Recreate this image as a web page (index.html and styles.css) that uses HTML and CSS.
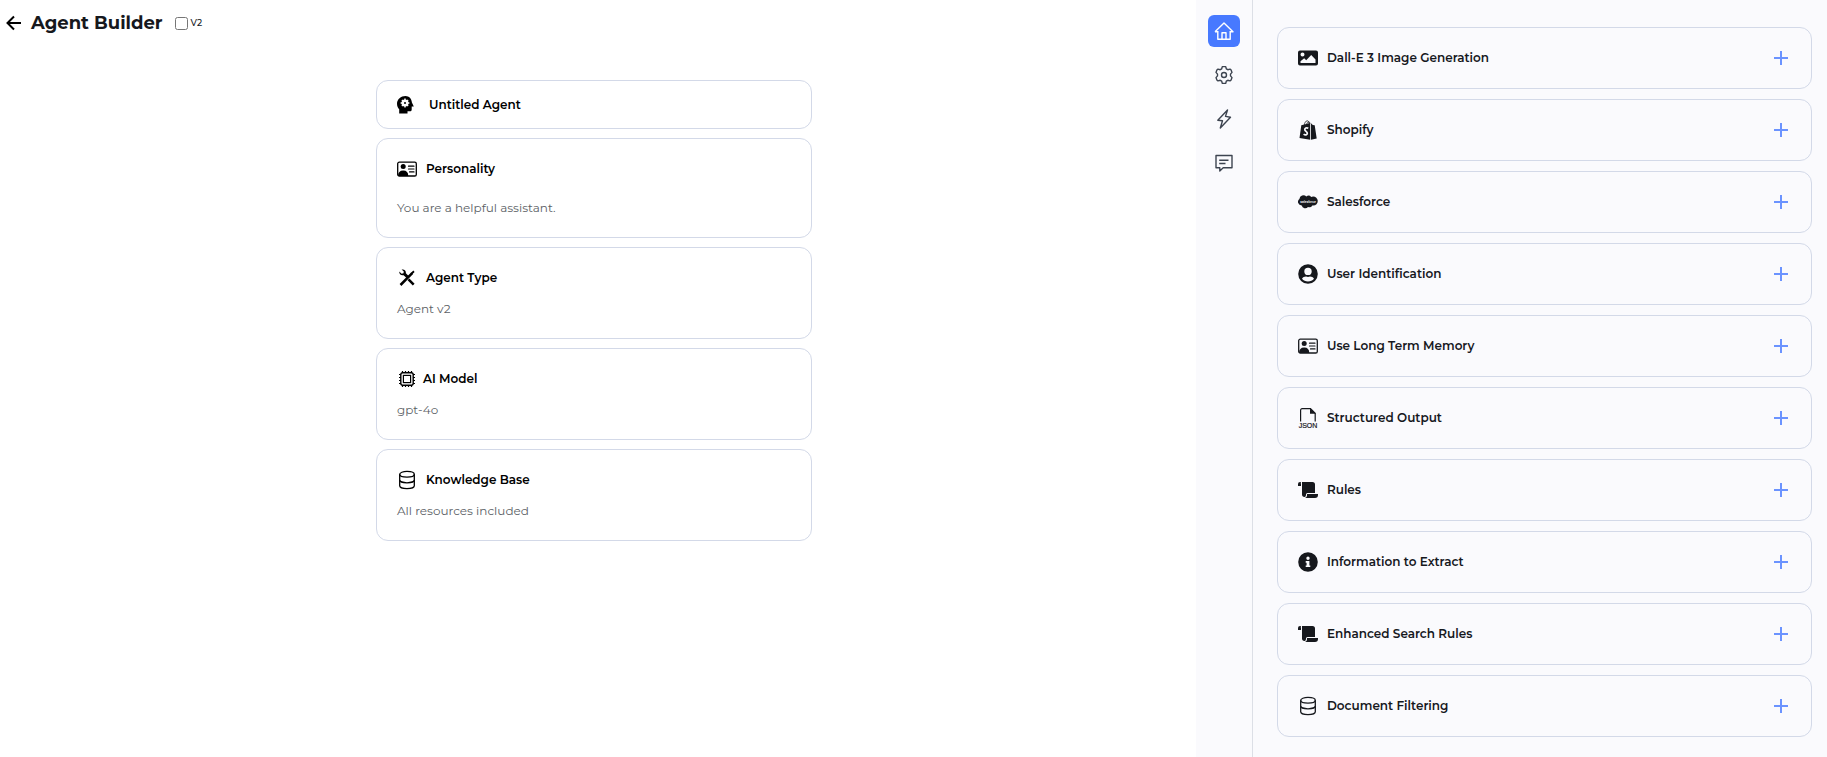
FILE: index.html
```html
<!DOCTYPE html>
<html lang="en">

<head>
    <meta charset="UTF-8">
    <meta name="viewport" content="width=device-width, initial-scale=1.0">
    <title>Agent Builder</title>
    <link rel="stylesheet" href="styles.css">
</head>

<body>
    <!-- shared icons -->
    <svg class="icon-defs" aria-hidden="true">
        <symbol id="icon-id" viewBox="0 0 20 20">
            <rect x="0.7" y="3.2" width="18.6" height="13.8" rx="1.6" fill="none" stroke="currentColor" stroke-width="1.3"/>
            <circle cx="6.2" cy="7.6" r="2.5"/>
            <path d="M1 17c.1-3.600 1.800-5.500 5.200-5.500s5 1.900 5.100 5.500z"/>
            <path d="M11.500 7.200h5.500M11.500 10h5.500M12.500 12.900h4.500" stroke="currentColor" stroke-width="1.200" stroke-linecap="round"/>
        </symbol>
        <symbol id="icon-db" viewBox="0 0 20 20">
            <g fill="none" stroke="currentColor" stroke-width="1.300">
                <ellipse cx="10" cy="4.300" rx="7.300" ry="2.900"/>
                <path d="M2.700 4.300v11.400c0 1.600 3.300 2.900 7.300 2.900s7.300-1.300 7.300-2.900V4.300"/>
                <path d="M2.700 9.900c0 1.600 3.300 2.900 7.300 2.900s7.300-1.300 7.300-2.900"/>
            </g>
        </symbol>
        <symbol id="icon-scroll" viewBox="0 0 20 20">
            <path d="M2 2a2 2 0 0 0-2 2v2h3V4a2 2 0 0 1 0-2zM4 2h10.500A2.500 2.500 0 0 1 17 4.500V13H9.500A1.500 1.500 0 0 0 8 14.500c0 1.300-.4 2.500-1.400 2.500C5 17.100 4 16 4 14.500z"/>
            <path d="M9 14h11v1a3 3 0 0 1-3 3H7c1.300-.4 2-1.500 2-3z"/>
        </symbol>
        <symbol id="icon-plus" viewBox="0 0 14 14">
            <path d="M7 0v14M0 7h14" stroke="currentColor" stroke-width="2"/>
        </symbol>
    </svg>

    <div class="layout">
        <main class="builder">
            <header class="topbar">
                <a class="back" href="#" aria-label="Back">
                    <svg viewBox="0 0 16 16"><path d="M15 8H2M8 1.500L1.500 8 8 14.500" fill="none" stroke="currentColor" stroke-width="2"/></svg>
                </a>
                <h1>Agent Builder</h1>
                <label class="version"><input type="checkbox"> V2</label>
            </header>

            <div class="cards">
                <section class="card name-card">
                    <h2>
                        <svg class="icon" viewBox="0 0 20 20">
                            <path d="M8.500 1C4 1 0 4.300 0 8.700c0 2.500 1 4.300 2.200 5.500V18.500h8.300v-2.200h2.300c1.200 0 1.900-.7 1.900-1.900v-2.800h2.100L14.900 7.500C14.700 3.800 12 1 8.500 1z"/>
                            <circle cx="8" cy="8" r="2.400" fill="none" stroke="#fff" stroke-width="2.200"/>
                            <path d="M8 3.600v8.800M3.600 8h8.800M4.900 4.900l6.200 6.200M11.100 4.900l-6.200 6.200" stroke="#fff" stroke-width="1.400"/>
                            <circle cx="8" cy="8" r="1"/>
                        </svg>
                        Untitled Agent
                    </h2>
                </section>
                <section class="card roomy">
                    <h2><svg class="icon"><use href="#icon-id"/></svg>Personality</h2>
                    <p>You are a helpful assistant.</p>
                </section>
                <section class="card">
                    <h2>
                        <svg class="icon" viewBox="0 0 20 20">
                            <path d="M3.500 17L15.200 5.200M11.500 11.300l5.200 5.400" stroke="currentColor" stroke-width="2.500"/>
                            <path d="M13.600 5.200l2.700-2.600 1.300 1.300-2.600 2.700zM2.300 3.500l2.300 2.200 1.900-.4.300-1.900-2.200-1.800c2.300-.7 4.700 1 4.300 3.600l3.200 3.300-2 2.100-3.500-3.400C4.100 8 2 5.900 2.300 3.500z"/>
                        </svg>
                        Agent Type
                    </h2>
                    <p>Agent v2</p>
                </section>
                <section class="card model-card">
                    <h2>
                        <svg class="icon" viewBox="0 0 20 20">
                            <g fill="none" stroke="currentColor">
                                <rect x="3.800" y="3.800" width="12.400" height="12.400" rx="2" stroke-width="1.400"/>
                                <rect x="6.400" y="6.400" width="7.200" height="7.200" stroke-width="1.200"/>
                                <path d="M5.500 2v2M8.500 2v2M11.500 2v2M14.500 2v2M5.500 16v2M8.500 16v2M11.500 16v2M14.500 16v2M2 5.500h2M2 8.500h2M2 11.500h2M2 14.500h2M16 5.500h2M16 8.500h2M16 11.500h2M16 14.500h2" stroke-width="1.200"/>
                            </g>
                        </svg>
                        AI Model
                    </h2>
                    <p>gpt-4o</p>
                </section>
                <section class="card">
                    <h2><svg class="icon"><use href="#icon-db"/></svg>Knowledge Base</h2>
                    <p>All resources included</p>
                </section>
            </div>
        </main>

        <nav class="rail">
            <button class="active" aria-label="Home">
                <svg viewBox="0 0 20 20"><path d="M3.800 10v8.200h12.400V10M1 10.700L10 2l9 8.700h-2.800M1 10.700h2.800M8 18v-6.200h4V18"/></svg>
            </button>
            <button aria-label="Settings">
                <svg viewBox="0 0 20 20"><path d="M8.300 1.600h3.400l.6 2.200 1.500.9 2.200-.6 1.100 1 .9 2.300-1.500 1.700v1.800l1.500 1.700-.9 2.300-1.100 1-2.200-.6-1.500.9-.6 2.200H8.300l-.6-2.200-1.500-.9-2.200.6-1.100-1L2 12.600l1.500-1.700V9.100L2 7.400l.9-2.300 1.100-1 2.200.6 1.500-.9z"/><circle cx="10" cy="10" r="2.500"/></svg>
            </button>
            <button aria-label="Actions">
                <svg viewBox="0 0 20 20"><path d="M13.500 1L3.800 11.200l4.700.6L6.300 19 16.500 8.300l-5-.9z"/></svg>
            </button>
            <button aria-label="Messages">
                <svg viewBox="0 0 20 20"><path d="M2 2.500h16v12.300H9.200L5.800 18v-3.200H2zM5.200 7.200h9.300M5.200 10.500h6.300"/></svg>
            </button>
        </nav>

        <aside class="panel">
            <ul class="tools">
                <li>
                    <svg class="icon" viewBox="0 0 20 20">
                        <path fill-rule="evenodd" d="M2 2.500h16a2 2 0 0 1 2 2v11a2 2 0 0 1-2 2H2a2 2 0 0 1-2-2v-11a2 2 0 0 1 2-2zM4.500 4.500a2 2 0 1 0 0 4 2 2 0 0 0 0-4zM2.500 15h15v-3.500L13.200 7l-5 5.200-2-2-3.700 3z"/>
                    </svg>
                    <span>Dall-E 3 Image Generation</span>
                    <button aria-label="Add Dall-E 3 Image Generation"><svg><use href="#icon-plus"/></svg></button>
                </li>
                <li>
                    <svg class="icon" viewBox="0 0 20 20">
                        <path d="M3.300 5.200l8.900-2.100v16.700L1.500 17.900zM13 3.200l1.800 1.900 1.900.2 2 13.100-5.700 1.400z"/>
                        <path d="M6.200 5.500C6.500 2.800 7.800.8 9.200.8s2.100 1.500 2.100 3.600M8.500 4.700C9 2.500 10.500 1 12.400 3.100" fill="none" stroke="currentColor" stroke-width=".8"/>
                        <path d="M10.300 8.200c-1.800-.9-3.600-.1-3.500 1.400.1 1.700 2.500 1.900 2.500 3.700 0 1.700-2 2.200-3.700.8" fill="none" stroke="#fafafd" stroke-width="1.700"/>
                    </svg>
                    <span>Shopify</span>
                    <button aria-label="Add Shopify"><svg><use href="#icon-plus"/></svg></button>
                </li>
                <li>
                    <svg class="icon" viewBox="0 0 20 20">
                        <path d="M8.300 4.500A3.600 3.600 0 0 1 13.200 5a4.400 4.400 0 0 1 1.800-.6 4.600 4.600 0 0 1 .3 9.200l-1-.1a3.400 3.400 0 0 1-4.300 1.500 3.600 3.600 0 0 1-6.300-1.400A3.700 3.700 0 0 1 1.400 7a4.100 4.100 0 0 1 6.900-2.500z"/>
                        <text class="cloud-text" x="10" y="11" text-anchor="middle">salesforce</text>
                    </svg>
                    <span>Salesforce</span>
                    <button aria-label="Add Salesforce"><svg><use href="#icon-plus"/></svg></button>
                </li>
                <li>
                    <svg class="icon" viewBox="0 0 20 20">
                        <path fill-rule="evenodd" d="M10 .2a9.800 9.800 0 1 1 0 19.600A9.800 9.800 0 0 1 10 .2zm0 3.500a3.700 3.700 0 1 0 0 7.400 3.700 3.700 0 0 0 0-7.400zM4 14.800c1.500 1.800 3.600 2.800 6 2.800s4.500-1 6-2.800c-.8-1.500-2.300-2.300-4-2.300-1.400.5-2.600.5-4 0-1.700 0-3.200.8-4 2.300z"/>
                    </svg>
                    <span>User Identification</span>
                    <button aria-label="Add User Identification"><svg><use href="#icon-plus"/></svg></button>
                </li>
                <li>
                    <svg class="icon"><use href="#icon-id"/></svg>
                    <span>Use Long Term Memory</span>
                    <button aria-label="Add Use Long Term Memory"><svg><use href="#icon-plus"/></svg></button>
                </li>
                <li>
                    <svg class="icon json-icon" viewBox="0 0 20 20">
                        <path d="M2.600 13.500V2.400C2.600 1.300 3.200.7 4.200.7h8.300l4.700 4.500v8.300" fill="none" stroke="currentColor" stroke-width="1.200"/>
                        <path d="M12 .2V5.700h5.700z"/>
                        <text x="10" y="20" text-anchor="middle">JSON</text>
                    </svg>
                    <span>Structured Output</span>
                    <button aria-label="Add Structured Output"><svg><use href="#icon-plus"/></svg></button>
                </li>
                <li>
                    <svg class="icon"><use href="#icon-scroll"/></svg>
                    <span>Rules</span>
                    <button aria-label="Add Rules"><svg><use href="#icon-plus"/></svg></button>
                </li>
                <li>
                    <svg class="icon" viewBox="0 0 20 20">
                        <path fill-rule="evenodd" d="M10 .2a9.800 9.800 0 1 1 0 19.600A9.800 9.800 0 0 1 10 .2zm0 4.300a1.700 1.700 0 1 0 0 3.400 1.700 1.700 0 0 0 0-3.400zM7.700 9v1.700h.9v2.700h-.9V15h4.600v-1.600h-.9V9z"/>
                    </svg>
                    <span>Information to Extract</span>
                    <button aria-label="Add Information to Extract"><svg><use href="#icon-plus"/></svg></button>
                </li>
                <li>
                    <svg class="icon"><use href="#icon-scroll"/></svg>
                    <span>Enhanced Search Rules</span>
                    <button aria-label="Add Enhanced Search Rules"><svg><use href="#icon-plus"/></svg></button>
                </li>
                <li>
                    <svg class="icon"><use href="#icon-db"/></svg>
                    <span>Document Filtering</span>
                    <button aria-label="Add Document Filtering"><svg><use href="#icon-plus"/></svg></button>
                </li>
            </ul>
        </aside>
    </div>
</body>

</html>
```
FILE: styles.css
```css
* {
    box-sizing: border-box;
}

body {
    margin: 0;
    font-family: Montserrat, Inter, sans-serif;
    font-size: 12px;
    line-height: 20px;
    color: #16181d;
    background-color: #fff;
}

h1, h2, p, ul {
    margin: 0;
    padding: 0;
}

button {
    display: flex;
    align-items: center;
    justify-content: center;
    padding: 0;
    border: none;
    background: none;
    cursor: pointer;
}

.icon-defs {
    display: none;
}

.icon {
    width: 20px;
    height: 20px;
    flex-shrink: 0;
    fill: currentColor;
}

.layout {
    display: grid;
    grid-template-columns: 25fr 57px 12fr;
    min-height: 100vh;
}

/* left side */
.builder {
    padding: 8px 14px 8px 6px;
}

.topbar {
    display: flex;
    align-items: center;
    height: 30px;
}

.back {
    display: flex;
    margin-right: 9px;
    color: #000;
}

.back svg {
    width: 16px;
    height: 16px;
}

h1 {
    font-size: 18px;
    font-weight: 700;
}

.version {
    display: flex;
    align-items: center;
    gap: 3px;
    margin-left: 12px;
    font-size: 9px;
    font-weight: 500;
}

.version input {
    margin: 0;
}

.cards {
    display: flex;
    flex-direction: column;
    gap: 9px;
    max-width: 436px;
    margin: 42px auto 0;
}

.card {
    display: flex;
    flex-direction: column;
    gap: 11px;
    padding: 20px 20px 19px;
    border: 1px solid #d3d9e8;
    border-radius: 12px;
    color: #000;
}

.card h2 {
    display: flex;
    align-items: center;
    gap: 9px;
    font-size: 12px;
    font-weight: 600;
}

.card p {
    color: #5c5f66;
}

.roomy {
    gap: 19px;
}

.name-card {
    padding: 14px 20px 13px;
}

.name-card h2 {
    gap: 12px;
}

.model-card h2 {
    gap: 6px;
}

/* icon rail */
.rail {
    display: flex;
    flex-direction: column;
    align-items: center;
    gap: 12px;
    padding-top: 15px;
    border-right: 1px solid #dcdfe6;
    background-color: #fafafd;
}

.rail button {
    width: 32px;
    height: 32px;
    border-radius: 6px;
    color: #3d4450;
}

.rail .active {
    background-color: #4779ff;
    color: #fff;
}

.rail svg {
    width: 20px;
    height: 20px;
    fill: none;
    stroke: currentColor;
    stroke-width: 1.4;
    stroke-linejoin: round;
}

/* tools panel */
.panel {
    padding: 27px 15px 20px 24px;
    background-color: #fafafd;
}

.tools {
    display: flex;
    flex-direction: column;
    gap: 10px;
    list-style: none;
}

.tools li {
    display: flex;
    align-items: center;
    gap: 9px;
    height: 62px;
    padding: 0 20px;
    border: 1px solid #d3d9e8;
    border-radius: 12px;
    font-weight: 600;
}

.tools button {
    width: 20px;
    height: 20px;
    margin-left: auto;
    color: #6b93ff;
}

.tools button svg {
    width: 14px;
    height: 14px;
}

.cloud-text {
    fill: #fafafd;
    font-size: 3px;
    font-style: italic;
}

.json-icon {
    overflow: visible;
}

.json-icon text {
    font-family: "Liberation Sans", sans-serif;
    font-size: 7px;
    font-weight: 400;
    stroke: currentColor;
    stroke-width: 0.2;
}
```
